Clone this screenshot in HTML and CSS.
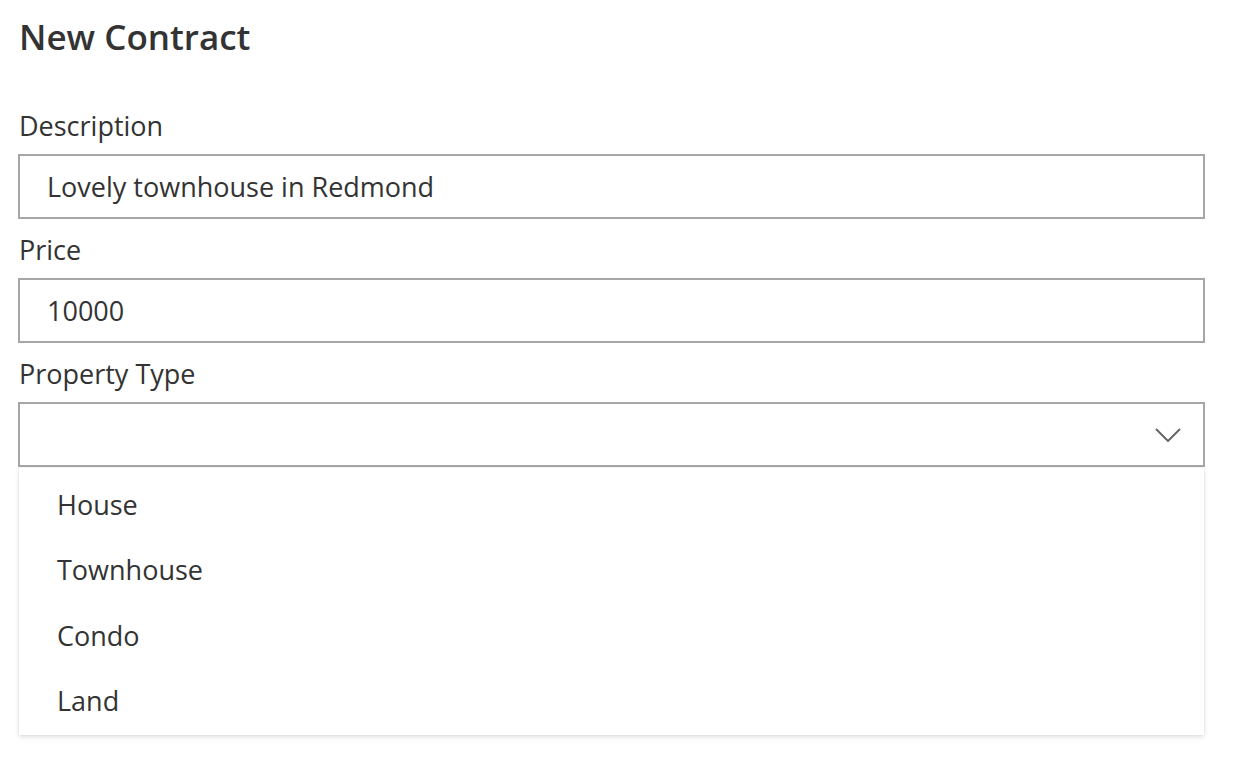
FILE: index.html
```html
<!DOCTYPE html>
<html lang="en">
<head>
<meta charset="utf-8">
<title>New Contract</title>
<link rel="stylesheet" href="styles.css">
</head>
<body>
<div class="page">
  <h1 class="title">New Contract</h1>
  <form class="form">
    <div class="field">
      <label class="label">Description</label>
      <div class="input">Lovely townhouse in Redmond</div>
    </div>
    <div class="field">
      <label class="label">Price</label>
      <div class="input">10000</div>
    </div>
    <div class="field">
      <label class="label">Property Type</label>
      <div class="dropdown">
        <div class="input select">
          <span class="value"></span>
          <svg class="chevron" width="26" height="14" viewBox="0 0 26 14"><path d="M1 1 L13 13 L25 1" fill="none" stroke="#666" stroke-width="2"/></svg>
        </div>
        <div class="menu">
          <div class="option">House</div>
          <div class="option">Townhouse</div>
          <div class="option">Condo</div>
          <div class="option">Land</div>
        </div>
      </div>
    </div>
  </form>
</div>
</body>
</html>
```
FILE: styles.css
```css
html, body {
  margin: 0;
  padding: 0;
  background: #fff;
}
body {
  font-family: "Open Sans", "Noto Sans", sans-serif;
  color: #333;
}
.page {
  padding: 12px 29px 20px 18px;
}
.title {
  margin: 0 0 0 1px;
  font-size: 35px;
  font-weight: 600;
  line-height: 50px;
  color: #333;
}
.form {
  margin-top: 33px;
}
.field {
  display: flex;
  flex-direction: column;
}
.label {
  display: block;
  font-size: 27px;
  line-height: 40px;
  padding: 11px 0 8px 1px;
}
.input {
  box-sizing: border-box;
  height: 65px;
  border: 2px solid #a6a6a6;
  padding: 0 27px;
  display: flex;
  align-items: center;
  font-size: 27px;
  color: #333;
}
.select {
  justify-content: space-between;
  padding-right: 22px;
}
.menu {
  margin: 1px 1px 0 1px;
  padding: 4px 0 2px;
  background: #fff;
  box-shadow: 0 2px 5px rgba(0,0,0,0.12), 0 0 2px rgba(0,0,0,0.08);
}
.option {
  height: 65.3px;
  display: flex;
  align-items: center;
  padding-left: 38px;
  font-size: 27px;
  color: #333;
}
```
